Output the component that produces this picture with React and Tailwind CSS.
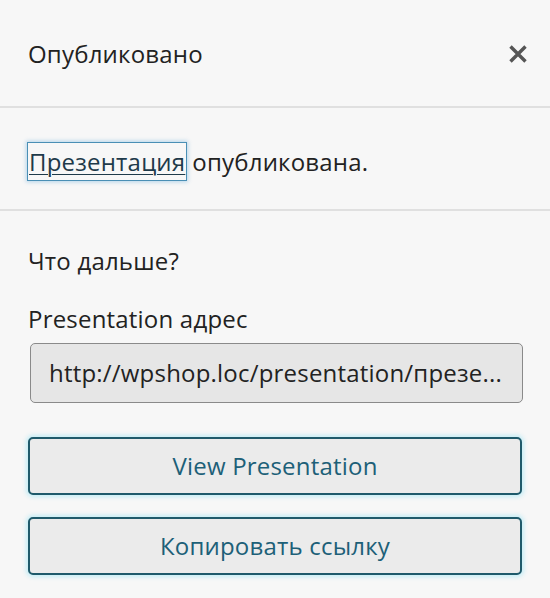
export default function App() {
  return (
    <div className="w-[550px] h-[598px] bg-[#f7f7f7] text-[#222] overflow-hidden" style={{ fontFamily: '"Open Sans", "Noto Sans", sans-serif' }}>
      {/* Header */}
      <div className="h-[108px] flex items-center justify-between pl-[28px] pr-[18px] border-b-2 border-[#e0e0e0]">
        <h1 className="text-[24px] font-normal tracking-[0.2px] text-[#222] pt-[2px]">Опубликовано</h1>
        <button className="w-[28px] h-[28px] flex items-center justify-center pt-[2px]">
          <svg width="20" height="20" viewBox="0 0 20 20" fill="none">
            <path d="M2.5 2.5 L17.5 17.5 M17.5 2.5 L2.5 17.5" stroke="#555" strokeWidth="3.4" />
          </svg>
        </button>
      </div>

      {/* Message */}
      <div className="h-[103px] flex items-center pl-[28px] pt-[6px] border-b-2 border-[#e0e0e0]">
        <p className="text-[24px] tracking-[0.2px] text-[#222]">
          <a href="#" className="underline underline-offset-[3px] decoration-1 text-[#1e3a4a] outline outline-1 outline-[#4a8fb5] shadow-[0_0_4px_2px_rgba(100,170,220,0.45)] px-[1px] py-[2px] mr-[6px]">Презентация</a>
          опубликована.
        </p>
      </div>

      {/* Next steps */}
      <div className="px-[28px] pt-[34px]">
        <p className="text-[24px] tracking-[0.2px] text-[#222] leading-[32px]">Что дальше?</p>
        <p className="text-[24px] tracking-[0.2px] text-[#222] leading-[32px] mt-[26px]">Presentation адрес</p>
        <div className="mt-[8px] ml-[2px] w-[493px] h-[60px] bg-[#e6e6e6] border border-[#8a8a8a] rounded-[5px] flex items-center pl-[18px] text-[24px] tracking-[0.2px] text-[#222] whitespace-nowrap overflow-hidden">
          http://wpshop.loc/presentation/презе...
        </div>

        <div className="mt-[34px] flex flex-col gap-[22px]">
          <button className="w-[494px] h-[58px] bg-[#ebebeb] border-2 border-[#1f5a6b] rounded-[5px] text-[24px] tracking-[0.2px] text-[#1d6078] shadow-[0_0_4px_2px_rgba(190,235,245,0.9)]">
            View Presentation
          </button>
          <button className="w-[494px] h-[58px] bg-[#ebebeb] border-2 border-[#1f5a6b] rounded-[5px] text-[24px] tracking-[0.2px] text-[#1d6078] shadow-[0_0_4px_2px_rgba(190,235,245,0.9)]">
            Копировать ссылку
          </button>
        </div>
      </div>
    </div>
  )
}
